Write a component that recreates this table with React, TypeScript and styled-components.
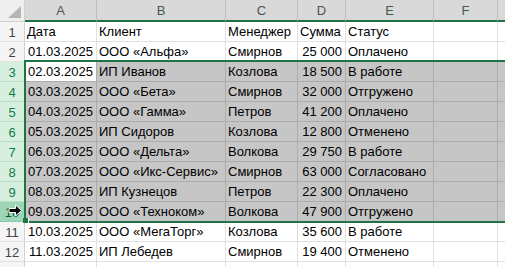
import React from 'react';
import styled, { createGlobalStyle, css } from 'styled-components';

const GREEN = '#217346';

const GlobalStyle = createGlobalStyle`
  html, body {
    margin: 0;
    padding: 0;
    background: #ffffff;
    overflow: hidden;
  }
  body {
    font-family: 'Liberation Sans', Arial, sans-serif;
  }
`;

const Sheet = styled.div`
  position: relative;
  width: 505px;
  height: 267px;
  overflow: hidden;
  display: grid;
  grid-template-columns: 25px 72px 129px 72px 48px 88px 64px 40px;
  grid-template-rows: 22px;
  grid-auto-rows: 20px;
  font-size: 13px;
  color: #000;
`;

const Corner = styled.div`
  background: #efefef;
  border-right: 1px solid #d0d0d0;
  border-bottom: 1px solid #d0d0d0;
  box-sizing: border-box;
  display: flex;
  align-items: flex-end;
  justify-content: flex-end;
  padding: 0 3px 3px 0;
`;

const ColHeader = styled.div`
  background: #d9d9d9;
  border-right: 1px solid #bdbdbd;
  border-bottom: 2px solid ${GREEN};
  box-sizing: border-box;
  display: flex;
  align-items: center;
  justify-content: center;
  color: #46584d;
  font-size: 13px;
`;

type RowState = 'normal' | 'selected' | 'hover';

const RowHeader = styled.div<{ $state: RowState }>`
  box-sizing: border-box;
  border-right: 1px solid #d0d0d0;
  border-bottom: 1px solid #e0e0e0;
  display: flex;
  align-items: center;
  justify-content: center;
  padding-top: 1px;
  background: #f5f5f5;
  color: #444;
  ${p =>
    p.$state === 'selected' &&
    css`
      background: #d6efdf;
      color: #107c41;
      border-bottom-color: #b8dcc6;
    `}
  ${p =>
    p.$state === 'hover' &&
    css`
      background: #9fd5b7;
      color: #0c5a2f;
      border-bottom-color: #8cc6a6;
    `}
`;

const Cell = styled.div<{ $selected: boolean; $active?: boolean; $right?: boolean }>`
  box-sizing: border-box;
  border-right: 1px solid #e0e0e0;
  border-bottom: 1px solid #e0e0e0;
  padding: 1px 2px 0 2px;
  line-height: 18px;
  white-space: nowrap;
  overflow: hidden;
  text-align: ${p => (p.$right ? 'right' : 'left')};
  ${p => p.$right && 'padding-right: 3px;'}
  ${p =>
    p.$selected &&
    css`
      background: #c6c6c6;
      border-right-color: #acacac;
      border-bottom-color: #acacac;
    `}
  ${p => p.$active && 'background: #ffffff;'}
`;

/* selection outline and cursor lie over the grid */
const SelectionFrame = styled.div`
  position: absolute;
  left: 24px;
  top: 60px;
  width: 500px;
  height: 163px;
  box-sizing: border-box;
  border: 2px solid ${GREEN};
  border-right: none;
  pointer-events: none;
`;

const FillHandle = styled.div`
  position: absolute;
  left: 23px;
  top: 218px;
  width: 5px;
  height: 5px;
  background: ${GREEN};
  box-shadow: 1px 0 0 #ffffff;
`;

const Pointer = styled.svg`
  position: absolute;
  left: 8px;
  top: 204px;
`;

const columns = ['A', 'B', 'C', 'D', 'E', 'F', ''];

const rows: string[][] = [
  ['Дата', 'Клиент', 'Менеджер', 'Сумма', 'Статус'],
  ['01.03.2025', 'ООО «Альфа»', 'Смирнов', '25 000', 'Оплачено'],
  ['02.03.2025', 'ИП Иванов', 'Козлова', '18 500', 'В работе'],
  ['03.03.2025', 'ООО «Бета»', 'Смирнов', '32 000', 'Отгружено'],
  ['04.03.2025', 'ООО «Гамма»', 'Петров', '41 200', 'Оплачено'],
  ['05.03.2025', 'ИП Сидоров', 'Козлова', '12 800', 'Отменено'],
  ['06.03.2025', 'ООО «Дельта»', 'Волкова', '29 750', 'В работе'],
  ['07.03.2025', 'ООО «Икс-Сервис»', 'Смирнов', '63 000', 'Согласовано'],
  ['08.03.2025', 'ИП Кузнецов', 'Петров', '22 300', 'Оплачено'],
  ['09.03.2025', 'ООО «Техноком»', 'Волкова', '47 900', 'Отгружено'],
  ['10.03.2025', 'ООО «МегаТорг»', 'Козлова', '35 600', 'В работе'],
  ['11.03.2025', 'ИП Лебедев', 'Смирнов', '19 400', 'Отменено'],
];

const App: React.FC = () => {
  return (
    <>
      <GlobalStyle />
      <Sheet>
        <Corner>
          <svg width='13' height='12' viewBox='0 0 13 12'>
            <polygon points='13,0 13,12 0,12' fill='#b5b5b5' />
          </svg>
        </Corner>
        {columns.map((c, i) => (
          <ColHeader key={i}>{c}</ColHeader>
        ))}
        {rows.map((row, r) => {
          const n = r + 1;
          const selected = n >= 3 && n <= 10;
          const state: RowState = n === 10 ? 'hover' : selected ? 'selected' : 'normal';
          return (
            <React.Fragment key={n}>
              <RowHeader $state={state}>{n}</RowHeader>
              {[...row, '', ''].map((value, c) => {
                const numeric = r > 0 && (c === 0 || c === 3);
                return (
                  <Cell
                    key={c}
                    $selected={selected}
                    $active={n === 3 && c === 0}
                    $right={numeric}
                  >
                    {value}
                  </Cell>
                );
              })}
            </React.Fragment>
          );
        })}
        {/* row 13 only peeks in at the bottom edge */}
        <RowHeader $state='normal' />
        {columns.map((_, c) => (
          <Cell key={c} $selected={false} />
        ))}
        <SelectionFrame />
        <FillHandle />
        <Pointer width='15' height='13' viewBox='0 0 15 13'>
          <polygon
            points='1,4.5 7.5,4.5 7.5,1 13.5,6.5 7.5,12 7.5,8.5 1,8.5'
            fill='#000'
            stroke='#fff'
            strokeWidth='1'
          />
        </Pointer>
      </Sheet>
    </>
  );
};

export default App;
